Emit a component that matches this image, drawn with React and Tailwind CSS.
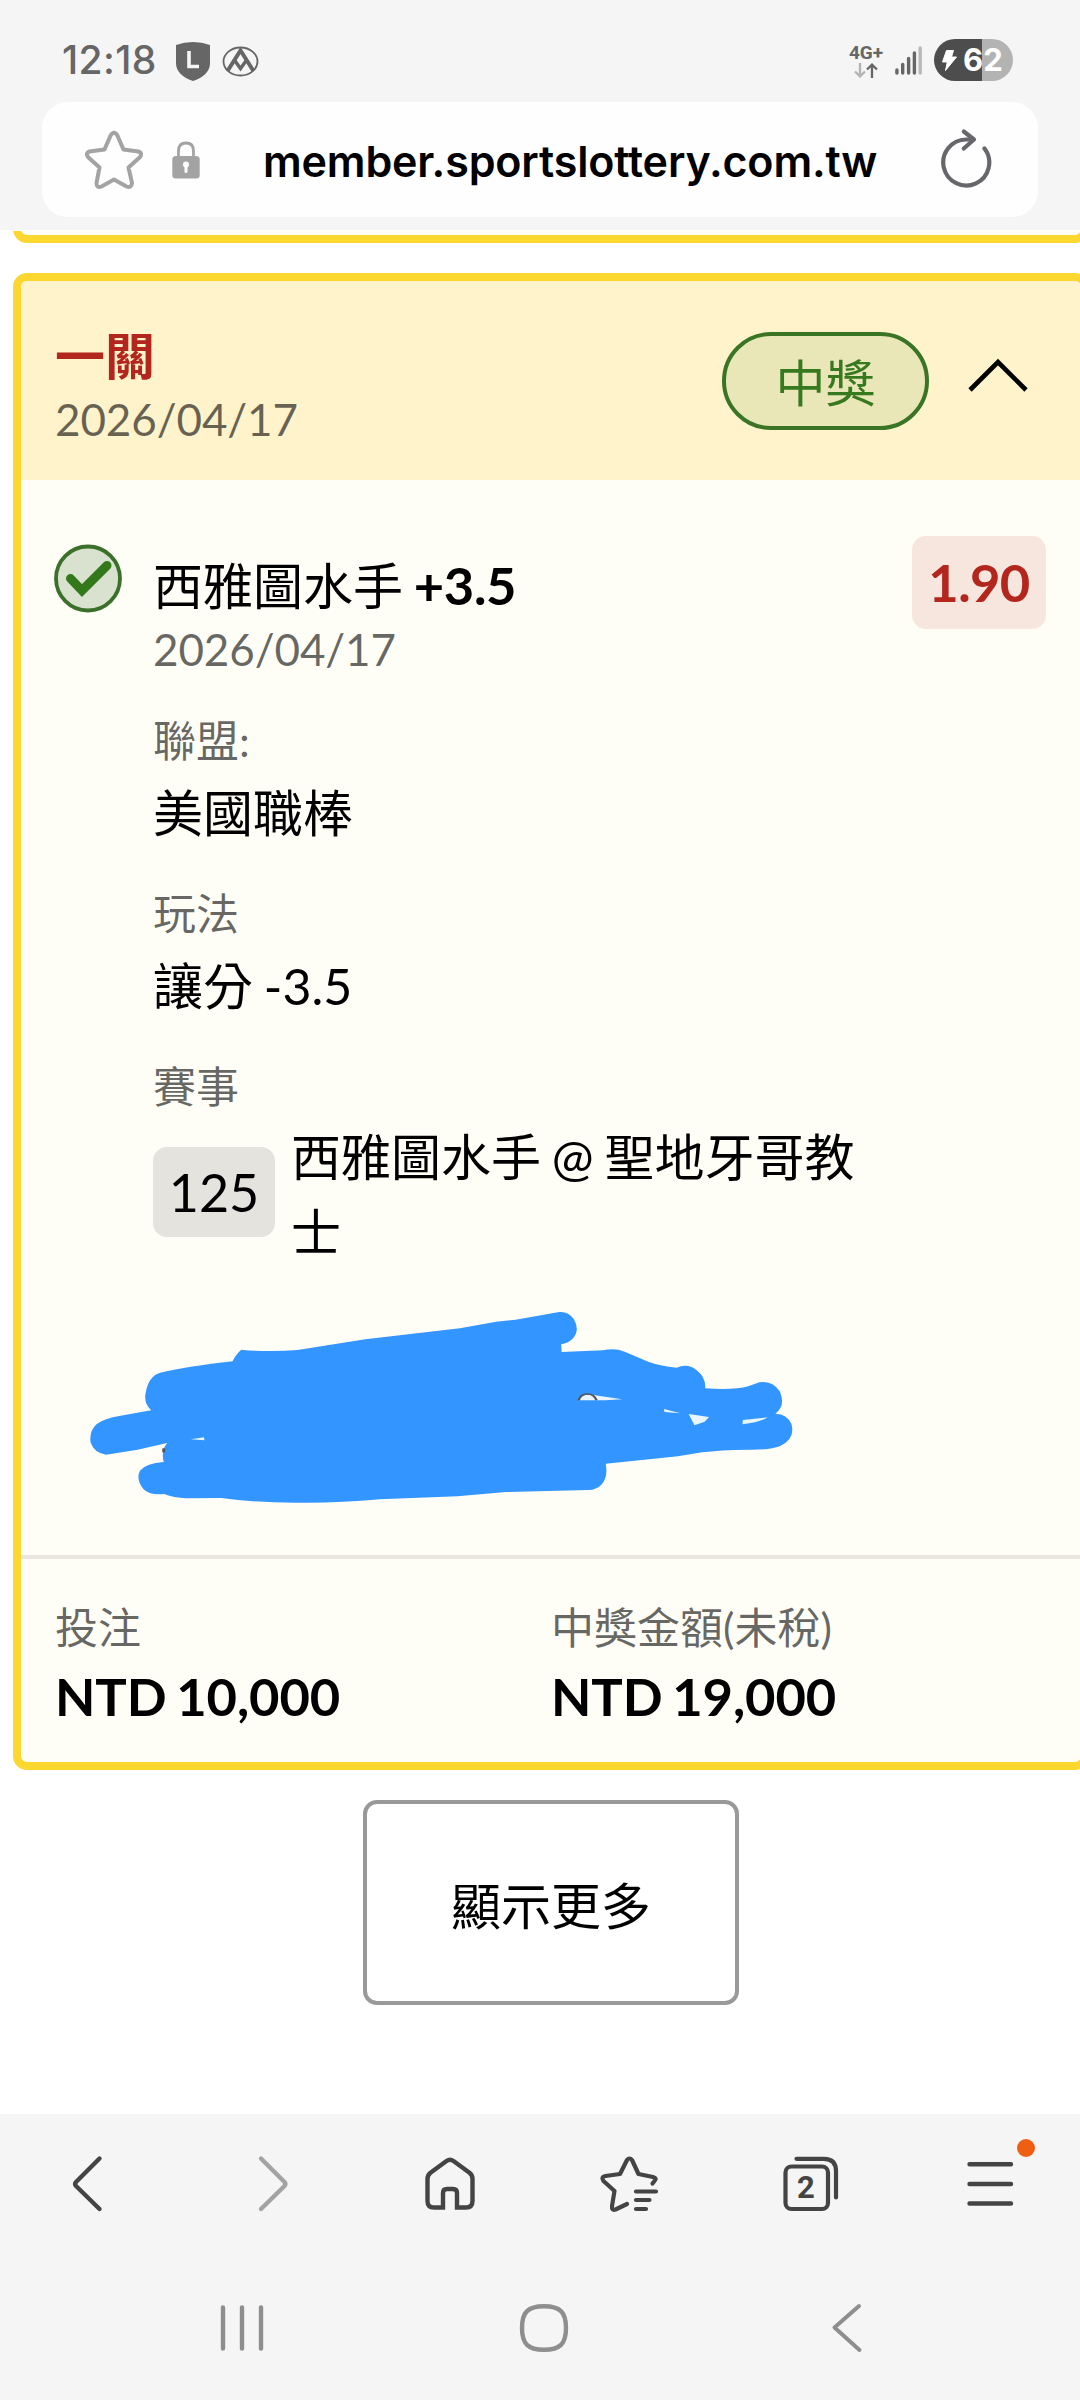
const details = [
    { label: '聯盟:', value: '美國職棒', labelClass: 'mt-[38px]', valueClass: 'mt-[15px]' },
    { label: '玩法', value: '讓分 -3.5', labelClass: 'mt-[44px]', valueClass: 'mt-[15px]' },
]

const totals = [
    { label: '投注', value: 'NTD 10,000' },
    { label: '中獎金額(未稅)', value: 'NTD 19,000' },
]

function StatusBar() {
    return (
        <div className="flex h-[102px] items-start text-[#666]">
            <span className="ml-[62px] mt-[36px] w-[114px] whitespace-nowrap font-['Inter',sans-serif] text-[39px] font-medium leading-[48px] tracking-[0.4px]">12:18</span>
            <svg className="mt-[42px] h-[39px] w-[34px]" viewBox="0 0 34 39">
                <path d="M0 3Q8 0 17 0Q26 0 34 3V21Q34 33 17 39Q0 33 0 21Z" fill="#666" />
                <path d="M13 9V24.5H23" fill="none" stroke="#f5f5f5" strokeWidth="3.6" />
            </svg>
            <svg className="ml-[12px] mt-[46px] h-[31px] w-[37px]" viewBox="0 0 37 31" fill="none" stroke="#666">
                <ellipse cx="18.5" cy="15.5" rx="17" ry="14" strokeWidth="1.8" />
                <path d="M5.5 25L18.5 4.5L31.5 25" strokeWidth="4" />
                <path d="M12 13.5L18.5 22.5L25 13.5" strokeWidth="3.4" />
            </svg>
            <div className="flex-1" />
            <div className="mt-[44px] w-[36px] text-center">
                <div className="whitespace-nowrap font-['Roboto',sans-serif] text-[19px] font-bold leading-[18px]">4G+</div>
                <svg className="mx-auto mt-px h-[15px] w-[26px]" viewBox="0 0 26 15" fill="none" strokeWidth="2.3">
                    <path d="M7 0V13M2 8.5L7 13.3L12 8.5" stroke="#b3b3b3" />
                    <path d="M19 15V2M14 6.5L19 1.7L24 6.5" stroke="#666" />
                </svg>
            </div>
            <svg className="ml-[11px] mt-[46px] h-[29px] w-[28px]" viewBox="0 0 28 29" strokeWidth="3.4" strokeLinecap="round" stroke="#666">
                <path d="M1.9 24V27M7.7 18.5V27M13.6 12.5V27M19.4 7V27" />
                <path d="M25.2 2V27" stroke="#b8b8b8" />
            </svg>
            <div className="ml-[11px] mr-[67px] mt-[39px] flex h-[42px] w-[79px] items-center rounded-full bg-[linear-gradient(90deg,#4d4d4d_48px,#b3b3b3_48px)] text-white">
                <svg className="ml-[7px] h-[23px] w-[17px]" viewBox="0 0 17 23" fill="white" stroke="white" strokeLinejoin="round">
                    <path d="M5.5 1.5H12.5L10.5 8H15.5L4.5 21.5L6.3 13H1.5Z" />
                </svg>
                <span className="ml-[5px] font-['Inter',sans-serif] text-[31px] font-bold leading-[42px]">62</span>
            </div>
        </div>
    )
}

function AddressBar() {
    return (
        <div className="mx-[42px] flex h-[115px] items-center rounded-[26px] bg-[#fefefe]">
            <svg className="ml-[41px] h-[62px] w-[62px]" viewBox="0 0 62 62" fill="none" stroke="#a3a3a3" strokeWidth="4" strokeLinejoin="round">
                <path d="M27.6 6.5Q31 1 34.4 6.5L40.5 20.5L55.5 22.5Q60 24 56.8 28.3L45.5 38.5L49 54Q48.5 59.5 43.5 57.5L31 50.5L18.5 57.5Q13.5 59.5 13.5 54L16.5 38.5L5.2 28.3Q2 24 6.5 22.5L21.5 20.5Z" />
            </svg>
            <svg className="ml-[26px] h-[38px] w-[30px]" viewBox="0 0 30 38">
                <path d="M7.5 17V10Q7.5 2 15 2Q22.5 2 22.5 10V17" fill="none" stroke="#a3a3a3" strokeWidth="2.8" />
                <rect x="1.3" y="15" width="27.4" height="22.5" rx="3.5" fill="#a3a3a3" />
                <circle cx="15" cy="23.5" r="3" fill="#fefefe" />
                <path d="M15 24V30.5" stroke="#fefefe" strokeWidth="3" strokeLinecap="round" />
            </svg>
            <span className="ml-[62px] mt-[2px] w-[642px] whitespace-nowrap font-['Inter',sans-serif] text-[43px] font-semibold leading-[60px] tracking-[-0.15px] text-black">member.sportslottery.com.tw</span>
            <svg className="ml-[34px] h-[64px] w-[54px]" viewBox="0 0 54 64" fill="none" stroke="#67676b" strokeWidth="4.2" strokeLinecap="round" strokeLinejoin="round">
                <path d="M45.5 20.5A23 23 0 1 1 27 11.5H33" />
                <path d="M24.8 3.5L35 11.5L24.8 20.5" />
            </svg>
        </div>
    )
}

function BetHeader() {
    return (
        <div className="flex h-[199px] items-start bg-[#fff3cc] pl-[34px]">
            <div className="flex-1 pt-[45px]">
                <div className="text-[50px] font-bold leading-[60px] text-[#b3261e]">一關</div>
                <div className="mt-[6px] text-[44px] leading-[54px] tracking-[-0.1px] text-black/60">2026/04/17</div>
            </div>
            <div className="mt-[51px] flex h-[98px] w-[207px] items-center justify-center rounded-full border-4 border-[#3a7526] bg-[#e9e7b8] pt-[3px] text-[50px] leading-[60px] text-[#36791f]">中獎</div>
            <svg className="ml-[37px] mr-[51px] mt-[69px] h-[46px] w-[64px]" viewBox="0 0 64 46" fill="none" stroke="#000" strokeWidth="4.6">
                <path d="M4 40L32 12L60 40" />
            </svg>
        </div>
    )
}

// Blue marker strokes drawn over the ticket number
function Scribble() {
    return (
        <svg className="-ml-[93px] mt-[19px] h-[230px] w-[760px]" viewBox="0 0 1568 690" preserveAspectRatio="none">
            <path
                fill="#3395ff"
                d="M374 182Q430 190 490 183L630 151L825 118L900 98L940 92L1030 69Q1048 66 1060 90Q1074 125 1057 150Q1048 163 1034 166L1035 189L1120 184Q1145 176 1165 188L1215 219Q1240 232 1272 236Q1295 222 1313 243Q1333 265 1331 298Q1390 304 1420 292L1443 280Q1470 275 1485 307Q1498 350 1476 374Q1500 375 1509 405Q1518 450 1485 472Q1465 483 1420 482Q1360 483 1325 490L1275 502L1126 524Q1131 565 1117 587Q1107 602 1090 603L920 609L820 622L660 631Q570 643 485 641Q400 641 333 627L260 628Q235 626 215 615Q185 620 172 600Q156 570 165 545Q178 522 214 519Q208 485 221 462L160 482L95 497Q70 492 63 460Q60 425 76 405Q90 388 125 380L188 364Q174 345 176 317Q182 260 207 251Q265 232 356 217Q362 197 374 182Z"
            />
            <g fill="#e9f6ff">
                <path d="M1070 334Q1075 314 1100 318L1160 331L1125 334Z" />
                <path d="M1246 360L1280 373L1247 369Z" />
                <path d="M1297 375L1339 384L1330 398L1309 409Z" />
                <path d="M1409 393L1460 385Q1445 400 1408 406Z" />
                <path d="M270 451L297 445L298 454Z" />
            </g>
            <path d="M1070 334Q1074 315 1088 315Q1102 315 1107 334" fill="none" stroke="#555" strokeWidth="5" />
            <path d="M214 478V490" stroke="#555" strokeWidth="6" />
        </svg>
    )
}

function BetBody() {
    return (
        <div className="flex h-[1075px] items-start pl-[33px]">
            <svg className="mt-[63px] h-[70px] w-[70px] shrink-0" viewBox="0 0 70 70">
                <circle cx="34" cy="35.5" r="32" fill="#d8e2cf" stroke="#3b702b" strokeWidth="3.8" />
                <path d="M16.5 35.5L28 47.5L53 22.5" fill="none" stroke="#33791c" strokeWidth="9" strokeLinecap="round" />
            </svg>
            <div className="ml-[29px] w-[721px] shrink-0 pt-[75px]">
                <div className="whitespace-nowrap text-[50px] leading-[60px]">
                    西雅圖水手 <span className="-ml-[2px] text-[52.5px] font-bold tracking-[-0.4px]">+3.5</span>
                </div>
                <div className="mt-[6px] text-[44px] leading-[54px] tracking-[-0.1px] text-black/60">2026/04/17</div>
                {details.map((item) => (
                    <div key={item.label} className={item.labelClass}>
                        <div className="text-[43px] leading-[54px] text-black/60">{item.label}</div>
                        <div className={`${item.valueClass} text-[50px] leading-[60px] [word-spacing:-2px]`}>{item.value}</div>
                    </div>
                ))}
                <div className="mt-[44px] text-[43px] leading-[54px] text-black/60">賽事</div>
                <div className="mt-[6px] flex items-start">
                    <div className="mt-[27px] flex h-[90px] w-[122px] shrink-0 items-center justify-center rounded-[14px] bg-[#e5e3dd] text-[52px]">125</div>
                    <div className="ml-[16px] w-[583px] break-all text-[50px] leading-[75px] [word-spacing:-2px]">西雅圖水手 @ 聖地牙哥教士</div>
                </div>
                <Scribble />
            </div>
            <div className="ml-[38px] mt-[56px] flex h-[93px] w-[134px] shrink-0 items-center justify-center rounded-[14px] bg-[#f7e6de] text-[52.5px] font-bold tracking-[-0.6px] text-[#b3261e]">1.90</div>
        </div>
    )
}

function TabBar() {
    return (
        <nav className="flex h-[140px] items-start justify-between px-[54px] pt-[34px] text-[#444]">
            <svg className="h-[72px] w-[72px]" viewBox="0 0 72 72" fill="none" stroke="currentColor" strokeWidth="4.4" strokeLinecap="round" strokeLinejoin="round">
                <path d="M45.5 10.5L22 34Q20.3 36 22 38L45.5 61" />
            </svg>
            <svg className="h-[72px] w-[72px]" viewBox="0 0 72 72" fill="none" stroke="#a3a3a3" strokeWidth="4.4" strokeLinecap="round" strokeLinejoin="round">
                <path d="M27 10.5L50.5 34Q52.2 36 50.5 38L27 61" />
            </svg>
            <svg className="h-[72px] w-[72px]" viewBox="0 0 72 72" fill="none" stroke="currentColor" strokeWidth="4.4">
                <path d="M32.5 13Q36 10.5 39.5 13L55.5 24.7Q58.5 27 58.5 31V53Q58.5 59.5 52 59.5H43V45Q43 41 39 41H33Q29 41 29 45V59.5H20Q13.5 59.5 13.5 53V31Q13.5 27 16.5 24.7Z" />
            </svg>
            <svg className="h-[72px] w-[72px]" viewBox="-1 0 72 72" fill="none" stroke="currentColor" strokeWidth="4.2" strokeLinecap="round" strokeLinejoin="round">
                <path d="M32 56L20.5 61.5Q16.5 63 17 58L19.5 43L8.5 33Q5.5 29 10.5 28L25 26L32 12Q34.5 9 37 12L43.5 26L58 29Q62.5 30.5 59.5 33L57.5 35.5" />
                <path d="M41 43.5H61M41 52H54.5M41 61H51" />
            </svg>
            <div className="relative h-[72px] w-[72px]">
                <svg className="h-[72px] w-[72px]" viewBox="-1 0 72 72" fill="none" stroke="currentColor" strokeWidth="4.2" strokeLinecap="round">
                    <rect x="10.5" y="18.5" width="42.5" height="42.5" rx="6" />
                    <path d="M21.5 10.8H49Q61 10.8 61 23V49.5" />
                </svg>
                <span className="absolute left-[11px] top-[18px] w-[42px] text-center font-['Roboto',sans-serif] text-[31px] font-bold leading-[44px]">2</span>
            </div>
            <div className="relative h-[72px] w-[72px]">
                <svg className="h-[72px] w-[72px]" viewBox="0 0 72 72" fill="none" stroke="currentColor" strokeWidth="4.4" strokeLinecap="round">
                    <path d="M15.5 16.3H57M15.5 36H57M15.5 55.5H57" />
                </svg>
                <span className="absolute -top-[9px] left-[63px] h-[18px] w-[18px] rounded-full bg-[#ee5f12]" />
            </div>
        </nav>
    )
}

function SystemNav() {
    return (
        <div className="flex h-[146px] items-start pt-[46px]">
            <svg className="ml-[218px] h-[56px] w-[48px]" viewBox="0 0 48 56" stroke="#8e8e8e" strokeWidth="4.4" strokeLinecap="round">
                <path d="M5 7.5V48.5M24 7.5V48.5M43 7.5V48.5" />
            </svg>
            <svg className="ml-[250px] h-[56px] w-[56px]" viewBox="0 0 56 56" fill="none" stroke="#8e8e8e" strokeWidth="4.4">
                <path d="M28 6.2C44 6.2 50 12 50 28C50 44 44 49.8 28 49.8C12 49.8 6 44 6 28C6 12 12 6.2 28 6.2Z" />
            </svg>
            <svg className="ml-[256px] h-[56px] w-[40px]" viewBox="0 0 40 56" fill="none" stroke="#8e8e8e" strokeWidth="4" strokeLinecap="round" strokeLinejoin="round">
                <path d="M31 6L6.5 27.5L31.5 50" />
            </svg>
        </div>
    )
}

export default function App() {
    return (
        <div className="flex h-[2400px] w-[1080px] flex-col overflow-hidden bg-white font-['Lato','Noto_Sans_CJK_TC',sans-serif] text-black">
            <header className="h-[230px] shrink-0 bg-[#f5f5f5]">
                <StatusBar />
                <AddressBar />
            </header>
            <main className="ml-[13px] flex h-[1884px] w-[1076px] shrink-0 flex-col items-center self-start pt-px">
                <div className="h-[12px] w-full shrink-0 overflow-hidden">
                    <div className="-mt-[28px] h-[40px] rounded-[14px] border-8 border-[#fbd72f] bg-[#fffef6]" />
                </div>
                <section className="mt-[30px] h-[1497px] w-full shrink-0 overflow-hidden rounded-[14px] border-8 border-[#fbd72f] bg-[#fffef6]">
                    <BetHeader />
                    <BetBody />
                    <div className="grid grid-cols-[496px_1fr] border-t-4 border-[#e8e6de] pl-[34px] pt-[42px]">
                        {totals.map((item) => (
                            <div key={item.label}>
                                <div className="text-[43px] leading-[54px] text-black/60">{item.label}</div>
                                <div className="mt-[11px] text-[52.5px] font-bold leading-[60px] tracking-[-0.1px] [word-spacing:-3px]">{item.value}</div>
                            </div>
                        ))}
                    </div>
                </section>
                <button className="mt-[30px] h-[205px] w-[376px] shrink-0 rounded-[14px] border-4 border-[#999] bg-white pt-[7px] text-[50px]">顯示更多</button>
            </main>
            <footer className="h-[286px] shrink-0 bg-[#f5f5f5]">
                <TabBar />
                <SystemNav />
            </footer>
        </div>
    )
}
